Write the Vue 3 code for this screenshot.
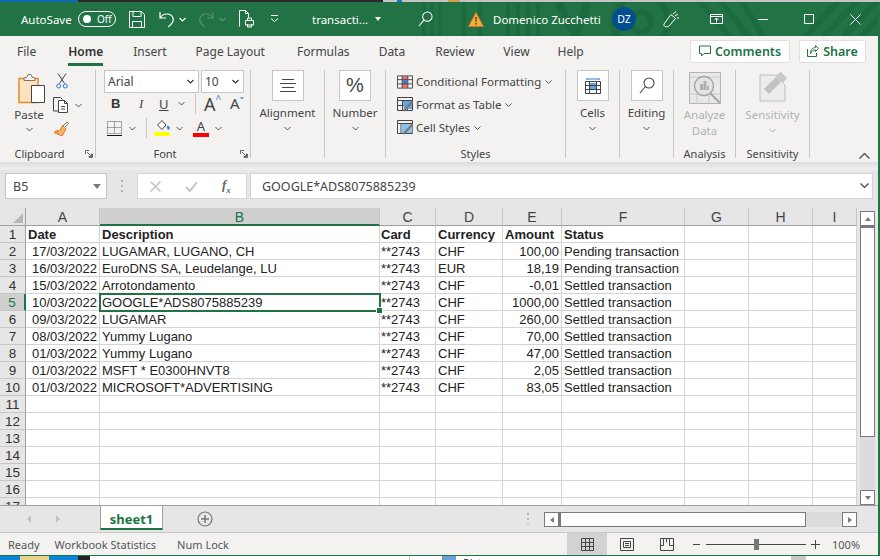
<script setup>
const columns = [
  { name: 'A', w: 74 }, { name: 'B', w: 280, active: true }, { name: 'C', w: 56 }, { name: 'D', w: 67 },
  { name: 'E', w: 59 }, { name: 'F', w: 123 }, { name: 'G', w: 64 }, { name: 'H', w: 64 }, { name: 'I', w: 44 }
]
const gridCols = '26px ' + columns.map(c => c.w + 'px').join(' ')
const data = [
  ['17/03/2022', 'LUGAMAR, LUGANO, CH', '**2743', 'CHF', '100,00', 'Pending transaction'],
  ['16/03/2022', 'EuroDNS SA, Leudelange, LU', '**2743', 'EUR', '18,19', 'Pending transaction'],
  ['15/03/2022', 'Arrotondamento', '**2743', 'CHF', '-0,01', 'Settled transaction'],
  ['10/03/2022', 'GOOGLE*ADS8075885239', '**2743', 'CHF', '1000,00', 'Settled transaction'],
  ['09/03/2022', 'LUGAMAR', '**2743', 'CHF', '260,00', 'Settled transaction'],
  ['08/03/2022', 'Yummy Lugano', '**2743', 'CHF', '70,00', 'Settled transaction'],
  ['01/03/2022', 'Yummy Lugano', '**2743', 'CHF', '47,00', 'Settled transaction'],
  ['01/03/2022', 'MSFT * E0300HNVT8', '**2743', 'CHF', '2,05', 'Settled transaction'],
  ['01/03/2022', 'MICROSOFT*ADVERTISING', '**2743', 'CHF', '83,05', 'Settled transaction']
]
const header = ['Date', 'Description', 'Card', 'Currency', 'Amount', 'Status', '', '', '']
const rows = []
rows.push({ n: 1, cells: header, bold: true })
data.forEach((d, i) => rows.push({ n: i + 2, cells: [...d, '', '', ''] }))
for (let n = 11; n <= 17; n++) rows.push({ n, cells: ['', '', '', '', '', '', '', '', ''] })
const tabs = ['File', 'Home', 'Insert', 'Page Layout', 'Formulas', 'Data', 'Review', 'View', 'Help']
function cellClass(r, i) {
  return { right: !r.bold && (i === 0 || i === 4), sel: r.n === 5 && i === 1, tight: i === 2 }
}
</script>

<template>
  <div class="page">
    <div class="desk-top"></div>
    <div class="window">
      <header class="title">
        <svg class="wm" width="460" height="34" viewBox="0 0 460 34" fill="none" stroke="#1e6a40" stroke-width="6">
          <circle cx="223" cy="20" r="10" />
          <circle cx="223" cy="20" r="27" stroke-width="7" />
          <path d="M6 0v34M14 0v34M22 0v34" stroke-width="3" />
          <path d="M46 0v34M62 0v34M90 0v34M100 0v34M110 0v34M120 0v34" stroke-width="4" />
          <path d="M140 0l18 34M170 0l-12 34" stroke-width="8" />
          <path d="M280 -4l32 40M300 -4l32 40M322 -4l24 40" />
          <path d="M388 34l34-36M406 34l34-36M426 34l34-36M444 34l20-22" />
        </svg>
        <span class="autosave">AutoSave</span>
        <span class="toggle"><i></i><b>Off</b></span>
        <svg class="q save" width="16" height="17" viewBox="0 0 16 17" fill="none" stroke="#fff"><path d="M.5.5h12l3 3v13H.5zM4 .5v5h8v-5M3.500 16.500v-6h9v6" /></svg>
        <svg class="q undo" width="15" height="17" viewBox="0 0 15 17" fill="none" stroke="#fff" stroke-width="1.200"><path d="M1 1v6h6M1.500 6.500C4 2 12 1.500 14 7c1 3-1 6-5 9" /></svg>
        <svg class="chev" width="7" height="5" viewBox="0 0 7 5" fill="none" stroke="#fff" stroke-width="1.200"><path d="M.5 1l3 3 3-3" /></svg>
        <svg class="q redo" width="15" height="17" viewBox="0 0 15 17" fill="none" stroke="#5b9274" stroke-width="1.200"><path d="M14 1v6H8M13.500 6.500C11 2 3 1.500 1 7c-1 3 1 6 5 9" /></svg>
        <svg class="chev dim" width="7" height="5" viewBox="0 0 7 5" fill="none" stroke="#5b9274" stroke-width="1.200"><path d="M.5 1l3 3 3-3" /></svg>
        <svg class="q print" width="15" height="18" viewBox="0 0 15 18" fill="none" stroke="#fff"><path d="M.5 16.500V.5h6l3 3v5M6.500.5v3h3M6.500 10.500h8v4.500h-8zM8.500 10.500V8h4v2.500M8.500 14v3h4v-3" /></svg>
        <svg class="q more" width="9" height="8" viewBox="0 0 9 8" fill="none" stroke="#fff"><path d="M1 .5h7M1 3.500l3.500 3 3.500-3" /></svg>
        <span class="doc">transacti...</span>
        <span class="caret"></span>
        <svg class="q search" width="15" height="16" viewBox="0 0 16 17" fill="none" stroke="#fff" stroke-width="1.100"><circle cx="10" cy="6" r="5" /><path d="M6.500 9.500L1 16" /></svg>
        <svg class="warn" width="16" height="15" viewBox="0 0 16 15"><path d="M8 .5l7.500 14H.5z" fill="#f0b040" stroke="#d9731a" /><path d="M7.300 5h1.400l-.2 5h-1zM7.300 11h1.400v1.500H7.300z" fill="#4b3200" /></svg>
        <span class="user">Domenico Zucchetti</span>
        <span class="avatar">DZ</span>
        <svg class="q pen" width="16" height="17" viewBox="0 0 16 17" fill="none" stroke="#fff"><path d="M1 13L8 3.500l4.500 4L6 15c-2 1.500-6 1-5-2zM10 3l3-2.500M12 5l3-2M14 7h2" /></svg>
        <svg class="q restore" width="13" height="10" viewBox="0 0 13 10" fill="none" stroke="#fff"><path d="M.5.5h12v9H.5zM.5 2.500h12M6.500 8.500V4M4.500 6l2-2 2 2" /></svg>
        <svg class="q min" width="10" height="1" viewBox="0 0 10 1"><path d="M0 0h10v1H0z" fill="#fff" /></svg>
        <svg class="q max" width="10" height="10" viewBox="0 0 10 10" fill="none" stroke="#fff"><path d="M.5.5h9v9h-9z" /></svg>
        <svg class="q close" width="11" height="11" viewBox="0 0 11 11" fill="none" stroke="#fff"><path d="M.5.5l10 10M10.500.5l-10 10" /></svg>
      </header>

      <nav class="tabs">
        <span v-for="t in tabs" :key="t" class="tab" :class="['t-' + t.replace(' ', ''), { on: t === 'Home' }]">{{ t }}</span>
        <span class="grow"></span>
        <button class="act comments">
          <svg width="12" height="12" viewBox="0 0 12 12" fill="none" stroke="#217346"><path d="M.5 1h11v7.500H5L2.500 11V8.500h-2z" /></svg>
          Comments
        </button>
        <button class="act share">
          <svg width="12" height="12" viewBox="0 0 12 12" fill="none" stroke="#217346"><path d="M8.500 .5l3 3-3 3V5C5 5 4 7 3.500 9c-.5-4 2-6 5-6.500zM.5 4v7.500h9V8" /></svg>
          Share
        </button>
      </nav>

      <section class="ribbon">
        <div class="group clip">
          <div class="gbody clip-body">
            <div class="paste">
              <svg class="paste-ic" width="28" height="30" viewBox="0 0 28 30" fill="none">
                <path d="M1 4.500h19v24H1z" fill="#fbe3c1" stroke="#e58a27" stroke-width="1.500" />
                <path d="M6 4l3-1 1-2.500h3l1 2.500 3 1v2.500H6z" fill="#f3f2f1" stroke="#777" />
                <path d="M13.500 11.500h13v17h-13z" fill="#fff" stroke="#444" />
              </svg>
              <span>Paste</span>
              <svg class="mini" width="7" height="5" viewBox="0 0 7 5" fill="none" stroke="#555"><path d="M.5 1l3 3 3-3" /></svg>
            </div>
            <div class="clip-tools">
              <svg width="12" height="16" viewBox="0 0 12 16" fill="none" stroke="#444"><path d="M2 .5l6.500 10M10 .5L3.500 10.500" /><circle cx="2.700" cy="13" r="2" stroke="#2b7cd3" /><circle cx="9.300" cy="13" r="2" stroke="#2b7cd3" /></svg>
              <div class="copy">
                <svg width="17" height="16" viewBox="0 0 17 16" fill="none" stroke="#444"><path d="M5 14H.5V.5h7l2 2" /><path d="M5.500 3.500h6l3 3v9h-9zM11.500 3.500v3h3M8 9.500h4M8 12h4" fill="#fff" /></svg>
                <svg class="mini" width="7" height="5" viewBox="0 0 7 5" fill="none" stroke="#555"><path d="M.5 1l3 3 3-3" /></svg>
              </div>
              <svg width="16" height="16" viewBox="0 0 16 16" fill="none"><path d="M9 6l5-5 1.500 1.500-5 5" stroke="#777" /><path d="M9.500 4.500l3.500 3.500-4 7-8-3.500 2-1.500 2-.5-1 2 3-2.500-1 1 2-2z" fill="#f6b26b" stroke="#e07a1f" /></svg>
            </div>
          </div>
          <div class="glabel">Clipboard</div>
          <svg class="launch" width="8" height="8" viewBox="0 0 8 8" fill="none" stroke="#666"><path d="M.5 4V.5H4M7.500 4v3.500H4M2 2l4 4M3.500 6.500H6.500V3.500" /></svg>
        </div>

        <div class="group font">
          <div class="gbody font-body">
            <div class="font-row">
              <span class="combo fname">Arial<svg width="7" height="5" viewBox="0 0 7 5" fill="none" stroke="#333" stroke-width="1.100"><path d="M.5 1l3 3 3-3" /></svg></span>
              <span class="combo fsize">10<svg width="7" height="5" viewBox="0 0 7 5" fill="none" stroke="#333" stroke-width="1.100"><path d="M.5 1l3 3 3-3" /></svg></span>
            </div>
            <div class="font-row row2">
              <span class="fb">B</span><span class="fi">I</span><span class="fu">U</span>
              <svg class="mini m1" width="7" height="5" viewBox="0 0 7 5" fill="none" stroke="#555"><path d="M.5 1l3 3 3-3" /></svg>
              <span class="vsep"></span>
              <span class="grow-a">A<sup class="up">^</sup></span>
              <span class="shrink-a">A<sup class="down">ˇ</sup></span>
            </div>
            <div class="font-row row3">
              <svg class="border-ic" width="15" height="15" viewBox="0 0 15 15" fill="none"><path d="M.5.5h14v12H.5zM7.500.5v12M.5 6.500h14" stroke="#555" stroke-dasharray="1 1" /><path d="M0 14.500h15" stroke="#111" /></svg>
              <svg class="mini" width="7" height="5" viewBox="0 0 7 5" fill="none" stroke="#555"><path d="M.5 1l3 3 3-3" /></svg>
              <span class="vsep short"></span>
              <div class="fill-ic">
                <svg width="15" height="11" viewBox="0 0 15 11" fill="none"><path d="M7 .5l4 4.500-4 4.500-4.500-4.500z" stroke="#444" fill="#fff" /><path d="M12 6.500c1-1 1.500-1 2.500 1v2h-2z" fill="#2b7cd3" /></svg>
                <i class="yellow"></i>
              </div>
              <svg class="mini" width="7" height="5" viewBox="0 0 7 5" fill="none" stroke="#555"><path d="M.5 1l3 3 3-3" /></svg>
              <div class="color-ic"><span>A</span><i class="red"></i></div>
              <svg class="mini" width="7" height="5" viewBox="0 0 7 5" fill="none" stroke="#555"><path d="M.5 1l3 3 3-3" /></svg>
            </div>
          </div>
          <div class="glabel">Font</div>
          <svg class="launch" width="8" height="8" viewBox="0 0 8 8" fill="none" stroke="#666"><path d="M.5 4V.5H4M7.500 4v3.500H4M2 2l4 4M3.500 6.500H6.500V3.500" /></svg>
        </div>

        <div class="group big g-align">
          <span class="bigbtn"><svg width="16" height="13" viewBox="0 0 16 13" stroke="#444" fill="none"><path d="M2 .5h12M0 4.500h16M2 8.500h12M0 12.500h16" /></svg></span>
          <span class="biglabel">Alignment</span>
          <svg class="mini" width="7" height="5" viewBox="0 0 7 5" fill="none" stroke="#555"><path d="M.5 1l3 3 3-3" /></svg>
        </div>
        <div class="group big g-num">
          <span class="bigbtn pct">%</span>
          <span class="biglabel">Number</span>
          <svg class="mini" width="7" height="5" viewBox="0 0 7 5" fill="none" stroke="#555"><path d="M.5 1l3 3 3-3" /></svg>
        </div>

        <div class="group g-styles">
          <div class="gbody style-list">
            <div class="style-row">
              <svg width="16" height="14" viewBox="0 0 17 14" fill="none"><path d="M5.500 1h6v4h-6z" fill="#f26d6d" /><path d="M5.500 9h6v4h-6z" fill="#f26d6d" /><path d="M6 5h5v4H6z" fill="#2b7cd3" /><path d="M.5.5h16v13H.5zM5.500.5v13M11.500.5v13M.5 4.500h16M.5 9h16" stroke="#444" /></svg>
              Conditional Formatting
              <svg class="tiny" width="7" height="4" viewBox="0 0 7 4" fill="none" stroke="#555"><path d="M.5.5l3 3 3-3" /></svg>
            </div>
            <div class="style-row">
              <svg width="16" height="15" viewBox="0 0 16 15" fill="none"><path d="M.5.5h15v13H.5zM.5 3.500h15M5.500 3.500v10M10.500 3.500v10M.5 8.500h15" stroke="#444" /><path d="M6 4h9v8L7 12z" fill="#5ea4e0" /><path d="M6.500 14l9-9.500" stroke="#777" stroke-width="2" /></svg>
              Format as Table
              <svg class="tiny" width="7" height="4" viewBox="0 0 7 4" fill="none" stroke="#555"><path d="M.5.5l3 3 3-3" /></svg>
            </div>
            <div class="style-row">
              <svg width="16" height="15" viewBox="0 0 16 15" fill="none"><path d="M.5.5h15v13H.5zM.5 3.500h15M4 3.500v10" stroke="#444" /><path d="M4.500 4h11v9h-11z" fill="#8dbfe8" /><path d="M6.500 14l9-9.500" stroke="#777" stroke-width="2" /></svg>
              Cell Styles
              <svg class="tiny" width="7" height="4" viewBox="0 0 7 4" fill="none" stroke="#555"><path d="M.5.5l3 3 3-3" /></svg>
            </div>
          </div>
          <div class="glabel">Styles</div>
        </div>

        <div class="group big g-cells">
          <span class="bigbtn"><svg width="16" height="16" viewBox="0 0 16 16" fill="none"><path d="M2 1h12M2 0v2M14 0v2" stroke="#2b7cd3" /><path d="M4.500 5h7v6h-7z" fill="#5ea4e0" /><path d="M.5 3.500h15v12H.5zM.5 7.500h15M.5 11.500h15M4.500 3.500v12M11.500 3.500v12" stroke="#444" /></svg></span>
          <span class="biglabel">Cells</span>
          <svg class="mini" width="7" height="5" viewBox="0 0 7 5" fill="none" stroke="#555"><path d="M.5 1l3 3 3-3" /></svg>
        </div>
        <div class="group big g-edit">
          <span class="bigbtn"><svg width="16" height="17" viewBox="0 0 16 17" fill="none" stroke="#444" stroke-width="1.100"><circle cx="10" cy="6" r="5" /><path d="M6.500 9.500L1 16" /></svg></span>
          <span class="biglabel">Editing</span>
          <svg class="mini" width="7" height="5" viewBox="0 0 7 5" fill="none" stroke="#555"><path d="M.5 1l3 3 3-3" /></svg>
        </div>
        <div class="group g-off g-analyze">
          <svg width="32" height="32" viewBox="0 0 32 32" fill="none">
            <path d="M.5.5h31v31H.5z" fill="#e8e8e8" stroke="#b3b3b3" />
            <path d="M.5 5h31M.5 22h31M8 22v10M20 22v10" stroke="#c8c8c8" />
            <circle cx="15" cy="14" r="9.500" fill="#e4e4e4" stroke="#a6a6a6" stroke-width="1.500" />
            <path d="M11 12h3v6h-3zM14.500 9h3v9h-3zM18 14h2v4h-2z" fill="#b0b0b0" />
            <path d="M21 21l10 10" stroke="#a6a6a6" stroke-width="2" />
          </svg>
          <span class="off-text">Analyze<br />Data</span>
          <div class="glabel">Analysis</div>
        </div>
        <div class="group g-off g-sens">
          <svg width="28" height="30" viewBox="0 0 28 30" fill="none">
            <path d="M1 3h15l10 10v16H1z" fill="#ececec" stroke="#bdbdbd" />
            <path d="M5 17L17 5l5 5-12 12z" fill="#c2c2c2" />
            <path d="M17 3l5-3 6 6-4 5z" fill="#c8c8c8" />
          </svg>
          <span class="off-text sens-t">Sensitivity</span>
          <svg class="mini off-ch" width="7" height="5" viewBox="0 0 7 5" fill="none" stroke="#aaa"><path d="M.5 1l3 3 3-3" /></svg>
          <div class="glabel">Sensitivity</div>
        </div>
        <svg class="collapse" width="11" height="6" viewBox="0 0 11 6" fill="none" stroke="#444" stroke-width="1.200"><path d="M.5 5.500l5-5 5 5" /></svg>
      </section>
      <div class="ribbon-shadow"></div>

      <div class="fx">
        <div class="namebox"><span>B5</span><i class="tri-down"></i></div>
        <span class="dots"></span>
        <div class="fxbtns">
          <svg width="11" height="11" viewBox="0 0 11 11" stroke="#c4c4c4" stroke-width="1.500" fill="none"><path d="M.5.5l10 10M10.500.5l-10 10" /></svg>
          <svg width="13" height="11" viewBox="0 0 13 11" stroke="#c4c4c4" stroke-width="2" fill="none"><path d="M1 6l4 4 7-9" /></svg>
          <span class="fxt">f<sub>x</sub></span>
        </div>
        <div class="formula"><span>GOOGLE*ADS8075885239</span><svg width="9" height="6" viewBox="0 0 9 6" fill="none" stroke="#444" stroke-width="1.200"><path d="M.5.5l4 4 4-4" /></svg></div>
      </div>

      <div class="sheet-area">
        <div class="sheet-main">
          <div class="grid" :style="{ gridTemplateColumns: gridCols }">
            <div class="corner"><i></i></div>
            <div v-for="c in columns" :key="c.name" class="colh" :class="{ active: c.active }">{{ c.name }}</div>
            <template v-for="r in rows" :key="r.n">
              <div class="rowh" :class="{ active: r.n === 5 }">{{ r.n }}</div>
              <div v-for="(v, i) in r.cells" :key="i" class="cell" :class="[cellClass(r, i), { bold: r.bold }]">{{ v }}<i v-if="r.n === 5 && i === 1" class="handle"></i></div>
            </template>
          </div>
        </div>
        <div class="vscroll">
          <span class="sbtn"><i class="tri-up"></i></span>
          <span class="thumb"></span>
          <span class="track"></span>
          <span class="sbtn"><i class="tri-down small"></i></span>
        </div>
      </div>

      <div class="sheetbar">
        <span class="nav-tri left"></span>
        <span class="nav-tri right"></span>
        <span class="sheettab">sheet1</span>
        <svg class="plus" width="16" height="16" viewBox="0 0 16 16" fill="none" stroke="#777"><circle cx="8" cy="8" r="7" stroke-width="1.200" /><path d="M8 4v8M4 8h8" stroke-width="1.500" /></svg>
        <span class="grow"></span>
        <span class="dots small"></span>
        <div class="hscroll">
          <span class="hbtn"><i class="hl"></i></span>
          <span class="hthumb"></span>
          <span class="htrack"></span>
          <span class="hbtn"><i class="hr"></i></span>
        </div>
      </div>

      <footer class="status">
        <span class="s1">Ready</span>
        <span class="s2">Workbook Statistics</span>
        <span class="s3">Num Lock</span>
        <span class="grow"></span>
        <span class="view on"><svg width="13" height="13" viewBox="0 0 13 13" fill="none" stroke="#444"><path d="M.5.5h12v12H.5zM4.500.5v12M8.500.5v12M.5 4.500h12M.5 8.500h12" /></svg></span>
        <span class="view"><svg width="14" height="13" viewBox="0 0 14 13" fill="none" stroke="#444"><path d="M.5.5h13v12H.5zM3.500 3.500h7v6h-7zM5 5.500h4M5 7.500h4" /></svg></span>
        <span class="view"><svg width="14" height="13" viewBox="0 0 14 13" fill="none" stroke="#444"><path d="M.5.5h13v12H.5zM.5 7.500h3V.5M9.500.5v7h4M6.500.5v4" /></svg></span>
        <span class="zoomctl">
          <i class="minus"></i>
          <span class="slider"><b></b></span>
          <svg width="9" height="9" viewBox="0 0 9 9" fill="none" stroke="#444"><path d="M4.500 0v9M0 4.500h9" /></svg>
        </span>
        <span class="pctz">100%</span>
      </footer>
    </div>
    <div class="desk-bottom">
      <i class="d1"></i><i class="d2"></i><i class="d3"></i><i class="d4"></i><i class="d5"></i><i class="d6"></i><i class="d7"></i>
      <span>Pictures</span>
    </div>
  </div>
</template>

<style>
html, body { margin: 0; background: #fff; overflow: hidden; }
</style>

<style scoped>
.page { width: 880px; height: 560px; display: flex; flex-direction: column; overflow: hidden; font-family: "Open Sans", "Noto Sans", sans-serif; color: #444; }
.desk-top { height: 2px; flex: none; background: linear-gradient(90deg, #0a6ab0 0 78px, #2a2a2a 78px 383px, #c4c4c4 383px 397px, #1a7ac0 397px 402px, #c4c4c4 402px 448px, #c9a24a 448px 460px, #c4c4c4 460px 880px); }
.window { flex: none; width: 878px; height: 553px; display: flex; flex-direction: column; border-right: 2px solid #217346; border-bottom: 1px solid #217346; box-sizing: content-box; }
.grow { flex: 1; }

/* title */
.title { flex: none; height: 34px; background: #217346; position: relative; display: flex; align-items: center; color: #fff; font-size: 11.5px; overflow: hidden; font-family: "Noto Sans", "Open Sans", sans-serif; }
.wm { position: absolute; right: 0; top: 0; }
.title > *:not(.wm) { position: relative; flex: none; }
.autosave { margin-left: 21px; width: 57px; font-size: 11.5px; }
.toggle { width: 38px; height: 16px; box-sizing: border-box; border: 1px solid #fff; border-radius: 9px; display: flex; align-items: center; }
.toggle i { width: 8px; height: 8px; border-radius: 50%; background: #fff; margin-left: 4px; }
.toggle b { font-weight: 400; font-size: 10px; margin-left: 6px; }
.save { margin-left: 13px; }
.undo { margin-left: 14px; }
.chev { margin-left: 5px; }
.redo { margin-left: 13px; }
.chev.dim { margin-left: 5px; }
.print { margin-left: 13px; }
.more { margin-left: 16px; }
.doc { margin-left: 33px; width: 63px; white-space: nowrap; }
.caret { width: 0; height: 0; border: 3.5px solid transparent; border-top: 4px solid #fff; border-bottom: 0; }
.search { margin-left: 37px; }
.warn { margin-left: 35px; }
.user { margin-left: 9px; width: 119px; white-space: nowrap; }
.avatar { width: 24px; height: 24px; border-radius: 50%; background: #004e8c; font-size: 10.5px; display: flex; align-items: center; justify-content: center; }
.pen { margin-left: 27px; }
.restore { margin-left: 31px; }
.min { margin-left: 35px; }
.max { margin-left: 36px; }
.close { margin-left: 36px; }

/* tabs */
.tabs { flex: none; height: 30px; background: #f3f2f1; display: flex; align-items: center; font-size: 12px; color: #444; font-family: "Noto Sans", "Open Sans", sans-serif; }
.tab { position: relative; white-space: nowrap; }
.t-File { margin-left: 17px; }
.t-Home { margin-left: 32px; font-weight: 600; color: #333; }
.t-Home::after { content: ""; position: absolute; left: 0; right: 0; bottom: -6px; height: 3px; background: #217346; }
.t-Insert { margin-left: 30px; }
.t-PageLayout { margin-left: 29px; }
.t-Formulas { margin-left: 32px; }
.t-Data { margin-left: 29px; }
.t-Review { margin-left: 30px; }
.t-View { margin-left: 29px; }
.t-Help { margin-left: 28px; }
.act { height: 23px; border: 1px solid #e1dfdd; border-radius: 2px; background: #fff; color: #217346; font: 600 12.5px "Noto Sans", "Open Sans", sans-serif; display: flex; align-items: center; gap: 4px; padding: 0; justify-content: center; }
.comments { width: 100px; margin-right: 9px; }
.share { width: 67px; margin-right: 12px; }

/* ribbon */
.ribbon { flex: none; height: 96px; background: #f3f2f1; display: flex; position: relative; font-size: 11.5px; font-family: "Noto Sans", "Open Sans", sans-serif; }
.group { position: relative; box-sizing: border-box; border-right: 1px solid #c8c6c4; height: 88px; margin-top: 4px; flex: none; display: flex; flex-direction: column; align-items: center; }
.gbody { flex: 1; width: 100%; }
.glabel { position: absolute; bottom: -3px; left: 0; right: 0; text-align: center; font-size: 11px; line-height: 14px; color: #444; }
.launch { position: absolute; right: 2px; bottom: 0; }
.clip { width: 96px; }
.clip .glabel { right: 16px; }
.font .glabel { right: 16px; }
.clip-body { display: flex; }
.paste { margin-left: 14px; display: flex; flex-direction: column; align-items: center; width: 30px; flex: none; }
.paste-ic { margin: 4px -3px 0 3px; }
.paste span { font-size: 11.5px; line-height: 16px; margin-top: 3px; }
.paste .mini { margin-top: 4px; }
.clip-tools { margin-left: 9px; padding-top: 3px; display: flex; flex-direction: column; gap: 8px; align-items: flex-start; }
.clip-tools > svg:first-child { margin-left: 3px; }
.copy { display: flex; align-items: center; gap: 5px; }
.font { width: 155px; }
.font-body { padding: 0 0 0 8px; box-sizing: border-box; }
.font-row { display: flex; align-items: center; }
.combo { height: 23px; box-sizing: border-box; background: #fff; border: 1px solid #c8c6c4; display: flex; align-items: center; justify-content: space-between; padding: 0 4px 0 3px; font: 12px "Noto Sans", sans-serif; }
.fname { width: 95px; margin-right: 2px; }
.fsize { width: 43px; }
.row2 { margin-top: 0; height: 21px; font-size: 14px; }
.fb { font: 700 13px "Liberation Sans", sans-serif; margin-left: 7px; width: 14px; color: #333; }
.fi { font: italic 13px "Liberation Serif", serif; margin-left: 14px; width: 10px; }
.fu { font: 13px "Noto Sans", sans-serif; margin-left: 10px; text-decoration: underline; width: 16px; }
.m1 { margin-left: 3px; }
.vsep { width: 1px; height: 20px; background: #c8c6c4; margin: 0 8px 0 10px; }
.vsep.short { margin: 0 7px 0 10px; }
.grow-a { font-size: 18px; line-height: 1; width: 25px; white-space: nowrap; }
.grow-a sup { color: #2b7cd3; font-size: 10px; position: absolute; margin-top: -1px; }
.shrink-a { font-size: 15px; line-height: 1; margin-left: 1px; white-space: nowrap; }
.shrink-a sup { color: #2b7cd3; font-size: 11px; position: absolute; }
.row3 { margin-top: 3px; height: 22px; }
.border-ic { margin-left: 3px; margin-right: 7px; }
.fill-ic { display: flex; flex-direction: column; width: 16px; align-items: center; margin-right: 6px; }
.fill-ic svg { margin-bottom: 1px; }
.yellow, .red { display: block; height: 4px; width: 16px; }
.yellow { background: #ffff00; }
.red { background: #ff0000; }
.color-ic { margin-left: 10px; margin-right: 6px; display: flex; flex-direction: column; align-items: center; width: 16px; font-size: 13px; line-height: 13px; }
.bigbtn { width: 32px; height: 31px; box-sizing: border-box; background: #fff; border: 1px solid #c8c6c4; display: flex; align-items: center; justify-content: center; }
.pct { font: 20px "Liberation Sans", sans-serif; color: #444; }
.biglabel { font-size: 11.5px; line-height: 16px; margin-top: 4px; margin-bottom: 5px; }
.g-align { width: 74px; }
.g-num { width: 61px; }
.g-styles { width: 180px; }
.style-list { padding: 3px 0 0 11px; box-sizing: border-box; display: flex; flex-direction: column; gap: 6px; }
.style-row { display: flex; align-items: center; gap: 3px; font-size: 11.5px; height: 17px; white-space: nowrap; }
.tiny { margin-left: 1px; }
.g-cells { width: 54px; }
.g-edit { width: 54px; }
.g-off { color: #ababab; }
.g-analyze { width: 62px; }
.g-analyze svg { margin-top: 2px; }
.g-analyze .off-text { margin-top: 3px; }
.off-text { color: #b2b2b2; font-size: 11.5px; line-height: 16px; text-align: center; }
.g-sens { width: 74px; }
.g-sens svg:first-child { margin-top: 2px; }
.sens-t { margin-top: 5px; }
.off-ch { margin-top: 5px; }
.collapse { position: absolute; right: 8px; bottom: 3px; }
.ribbon-shadow { flex: none; height: 8px; background: linear-gradient(#dcdcdc, #f0f0f0); }

/* formula bar */
.fx { flex: none; height: 35px; background: #e6e6e6; display: flex; align-items: flex-start; padding-top: 3px; box-sizing: border-box; font: 12.5px "Noto Sans", sans-serif; }
.namebox { margin-left: 5px; width: 102px; height: 26px; box-sizing: border-box; background: #fff; border: 1px solid #c6c6c6; display: flex; align-items: center; justify-content: space-between; padding: 0 5px 0 7px; }
.tri-down { width: 0; height: 0; border: 4px solid transparent; border-top: 5px solid #7a7a7a; border-bottom: 0; }
.dots { width: 2px; height: 12px; margin: 7px 14px 0 14px; background: repeating-linear-gradient(#b5b5b5 0 2px, transparent 2px 5px); }
.fxbtns { width: 110px; height: 26px; box-sizing: border-box; background: #fff; border: 1px solid #d4d4d4; display: flex; align-items: center; gap: 24px; padding-left: 12px; margin-right: 3px; }
.fxt { font: italic 700 13px "Liberation Serif", serif; color: #666; }
.fxt sub { font-size: 9px; }
.formula { width: 623px; height: 26px; box-sizing: border-box; background: #fff; border: 1px solid #d4d4d4; display: flex; align-items: center; justify-content: space-between; padding: 0 3px 0 11px; color: #444; }

/* grid */
.sheet-area { flex: none; height: 301px; background: #e6e6e6; display: flex; padding-top: 3px; box-sizing: border-box; }
.sheet-main { width: 857px; height: 298px; overflow: hidden; flex: none; background: #fff; }
.grid { display: grid; grid-auto-rows: 17px; grid-template-rows: 18px; font: 13px/17px "Liberation Sans", sans-serif; color: #222; }
.corner { background: #e6e6e6; border-right: 1px solid #9f9f9f; border-bottom: 1px solid #9f9f9f; box-sizing: border-box; position: relative; }
.corner i { position: absolute; right: 2px; bottom: 2px; width: 0; height: 0; border-left: 10px solid transparent; border-bottom: 10px solid #b6b6b6; }
.colh { background: #e6e6e6; border-right: 1px solid #c6c6c6; border-bottom: 1px solid #9f9f9f; box-sizing: border-box; text-align: center; font-size: 14px; line-height: 18px; color: #444; }
.colh.active { background: #cfcfcf; color: #217346; border-bottom: 2px solid #217346; }
.rowh { background: #e6e6e6; border-right: 1px solid #9f9f9f; border-bottom: 1px solid #c6c6c6; box-sizing: border-box; text-align: center; font-size: 13.5px; line-height: 17px; color: #333; }
.rowh.active { background: #cfcfcf; color: #217346; border-right: 2px solid #217346; }
.cell { border-right: 1px solid #d4d4d4; border-bottom: 1px solid #d4d4d4; box-sizing: border-box; padding: 0 2px; white-space: nowrap; position: relative; background: #fff; }
.cell.tight { padding-left: 1px; }
.cell.bold { font-weight: 700; }
.cell.right { text-align: right; }
.cell.sel { outline: 2px solid #217346; outline-offset: -1px; z-index: 2; }
.handle { position: absolute; right: -3px; bottom: -3px; width: 5px; height: 5px; background: #217346; border: 1px solid #fff; box-sizing: content-box; margin: -1px; }

.vscroll { width: 15px; margin: 3px 3px 0 3px; display: flex; flex-direction: column; height: 294px; background: #dcdcdc; box-sizing: border-box; }
.sbtn { flex: none; width: 15px; height: 15px; box-sizing: border-box; background: #fff; border: 1px solid #7a7a7a; display: flex; align-items: center; justify-content: center; }
.tri-up { width: 0; height: 0; border: 3.5px solid transparent; border-bottom: 4px solid #7a7a7a; border-top: 0; }
.tri-down.small { border-width: 4px 3.5px 0; border-top-color: #7a7a7a; }
.thumb { flex: none; height: 211px; box-sizing: border-box; background: #fff; border: 1px solid #7a7a7a; border-top: 2px solid #7a7a7a; }
.track { flex: 1; background: #dcdcdc; }

/* sheet bar */
.sheetbar { flex: none; height: 28px; background: #e6e6e6; border-top: 1px solid #9f9f9f; border-bottom: 1px solid #c6c6c6; box-sizing: border-box; display: flex; align-items: flex-start; position: relative; margin-top: -1px; }
.nav-tri { width: 0; height: 0; margin-top: 9px; border: 4px solid transparent; }
.nav-tri.left { margin-left: 27px; border-right: 4px solid #c0c0c0; border-left: 0; }
.nav-tri.right { margin-left: 25px; border-left: 4px solid #c0c0c0; border-right: 0; }
.sheettab { margin-left: 40px; margin-top: -1px; height: 25px; width: 63px; box-sizing: border-box; background: #fff; border: 1px solid #9f9f9f; border-bottom: 2px solid #217346; text-align: center; font: 700 13px/26px "Noto Sans", sans-serif; color: #217346; }
.plus { margin-left: 34px; margin-top: 5px; }
.dots.small { margin: 7px 15px 0 0; height: 11px; }
.hscroll { display: flex; width: 313px; height: 15px; margin: 6px 21px 0 0; background: #dcdcdc; }
.hbtn { flex: none; width: 15px; height: 15px; box-sizing: border-box; border: 1px solid #7a7a7a; background: #fff; display: flex; align-items: center; justify-content: center; }
.hl { width: 0; height: 0; border: 3.5px solid transparent; border-right: 4px solid #7a7a7a; border-left: 0; }
.hr { width: 0; height: 0; border: 3.5px solid transparent; border-left: 4px solid #7a7a7a; border-right: 0; }
.hthumb { flex: none; width: 247px; box-sizing: border-box; background: #fff; border: 1px solid #7a7a7a; border-left: 2px solid #7a7a7a; }
.htrack { flex: 1; }

/* status */
.status { flex: 1; min-height: 0; background: #f3f2f1; display: flex; align-items: center; font: 11px "Noto Sans", sans-serif; color: #555; }
.s1 { margin-left: 8px; }
.s2 { margin-left: 15px; }
.s3 { margin-left: 21px; }
.view { width: 40px; height: 100%; display: flex; align-items: center; justify-content: center; }
.view.on { background: #d2d2d2; }
.zoomctl { display: flex; align-items: center; margin-left: 6px; }
.minus { width: 7px; height: 1px; background: #444; display: block; }
.slider { width: 100px; height: 1px; background: #444; margin: 0 5px 0 6px; position: relative; }
.slider b { position: absolute; left: 48px; top: -5px; width: 5px; height: 11px; background: #777; }
.pctz { margin: 0 19px 0 12px; font-size: 11px; width: 27px; white-space: nowrap; }

.desk-bottom { flex: 1; min-height: 0; position: relative; background: #fff; overflow: hidden; font: 11px "Noto Sans", sans-serif; color: #333; }
.desk-bottom span { position: absolute; left: 463px; top: -1px; }
.desk-bottom i { position: absolute; top: 0; height: 6px; }
.d1 { left: 0; width: 20px; background: #0a84d6; }
.d2 { left: 20px; width: 29px; background: #e9d28c; }
.d3 { left: 49px; width: 29px; background: #0a84d6; }
.d4 { left: 78px; width: 12px; background: #222; }
.d5 { left: 409px; width: 1px; background: #c8c8c8; }
.d6 { left: 442px; width: 14px; background: #6a9fd4; }
.d7 { left: 791px; width: 15px; background: #c8c8c8; }
</style>
